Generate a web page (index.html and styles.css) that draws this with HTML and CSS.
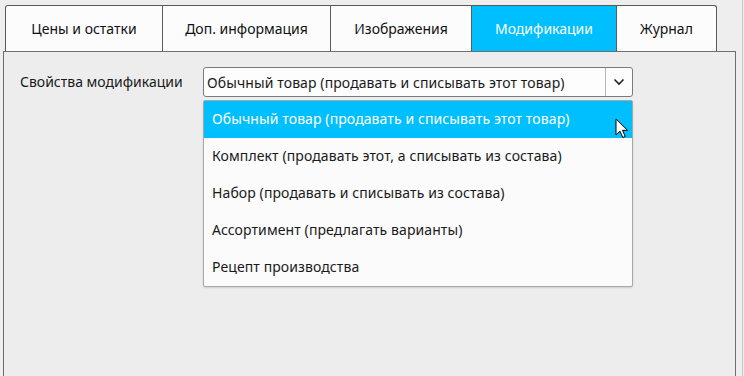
FILE: index.html
```html
<!DOCTYPE html>
<html lang="ru">
<head>
<meta charset="UTF-8">
<meta name="viewport" content="width=device-width, initial-scale=1.0">
<title>Модификации</title>
<link rel="stylesheet" href="styles.css">
</head>
<body>
<div class="window">
  <div class="tabs">
    <div class="tab tab-prices">Цены и остатки</div>
    <div class="tab tab-info">Доп. информация</div>
    <div class="tab tab-images">Изображения</div>
    <div class="tab tab-mods active">Модификации</div>
    <div class="tab tab-log">Журнал</div>
  </div>
  <div class="panel">
    <div class="field">
      <label class="field-label">Свойства модификации</label>
      <div class="combo">
        <div class="combo-value">Обычный товар (продавать и списывать этот товар)</div>
        <div class="combo-button">
          <svg width="12" height="8" viewBox="0 0 12 8"><path d="M1.5 1.5 L6 6 L10.5 1.5" fill="none" stroke="#222" stroke-width="1.6"/></svg>
        </div>
        <ul class="combo-list">
          <li class="combo-item selected">Обычный товар (продавать и списывать этот товар)</li>
          <li class="combo-item">Комплект (продавать этот, а списывать из состава)</li>
          <li class="combo-item">Набор (продавать и списывать из состава)</li>
          <li class="combo-item">Ассортимент (предлагать варианты)</li>
          <li class="combo-item">Рецепт производства</li>
        </ul>
        <svg class="cursor" width="14" height="22" viewBox="0 0 14 22">
          <path d="M1 1 L1 17 L5 13.2 L7.8 19.5 L10.2 18.4 L7.5 12.3 L12.6 12.3 Z" fill="#fff" stroke="#000" stroke-width="1" stroke-linejoin="round"/>
        </svg>
      </div>
    </div>
  </div>
</div>
</body>
</html>
```
FILE: styles.css
```css
body {
  margin: 0;
  background-color: #eeeeee;
  font-family: "Noto Sans", "Open Sans", sans-serif;
  font-size: 14px;
  color: #1a1a1a;
  overflow: hidden;
}

.window {
  width: 742px;
  height: 376px;
  border-right: 1px solid #c8c8c8;
}

.tabs {
  display: flex;
  padding: 5px 0 0 5px;
}

.tab {
  height: 46px;
  display: flex;
  align-items: center;
  justify-content: center;
  background-color: #fcfcfc;
  border: 1px solid #5a5a5a;
  border-bottom: none;
  border-left: none;
  box-sizing: border-box;
  color: #111;
}

.tab-prices {
  width: 158px;
  border-left: 1px solid #5a5a5a;
  border-top-left-radius: 3px;
}

.tab-info {
  width: 168px;
}

.tab-images {
  width: 141px;
}

.tab-mods {
  width: 145px;
}

.tab-log {
  width: 100px;
  border-top-right-radius: 3px;
}

.tab.active {
  background-color: #00bfff;
  color: #fff;
}

.panel {
  margin-left: 3px;
  width: 733px;
  height: 340px;
  box-sizing: border-box;
  border: 1px solid #6e6e6e;
  background-color: #ededed;
  padding: 15px 0 0 16px;
}

.field {
  display: flex;
  align-items: flex-start;
}

.field-label {
  width: 183px;
  padding-top: 5px;
}

.combo {
  position: relative;
  width: 430px;
  height: 30px;
  box-sizing: border-box;
  border: 1px solid #7a7a7a;
  border-radius: 3px;
  background-color: #fdfdfd;
  display: flex;
}

.combo-value {
  flex: 1;
  padding: 5px 0 0 3px;
  white-space: nowrap;
  letter-spacing: 0.1px;
}

.combo-button {
  width: 26px;
  border-left: 1px solid #b4b4b4;
  display: flex;
  align-items: center;
  justify-content: center;
}

.combo-list {
  position: absolute;
  top: 32px;
  left: -1px;
  width: 430px;
  box-sizing: border-box;
  margin: 0;
  padding: 0;
  list-style: none;
  background-color: #fbfbfb;
  border: 1px solid #a8a8a8;
  border-radius: 2px;
  box-shadow: 0 1px 2px rgba(0, 0, 0, 0.12);
}

.combo-item {
  height: 37px;
  line-height: 36px;
  padding-left: 8px;
  white-space: nowrap;
  letter-spacing: 0.1px;
}

.combo-item.selected {
  background-color: #00bfff;
  color: #fff;
}

.cursor {
  position: absolute;
  left: 411px;
  top: 50px;
}
```
